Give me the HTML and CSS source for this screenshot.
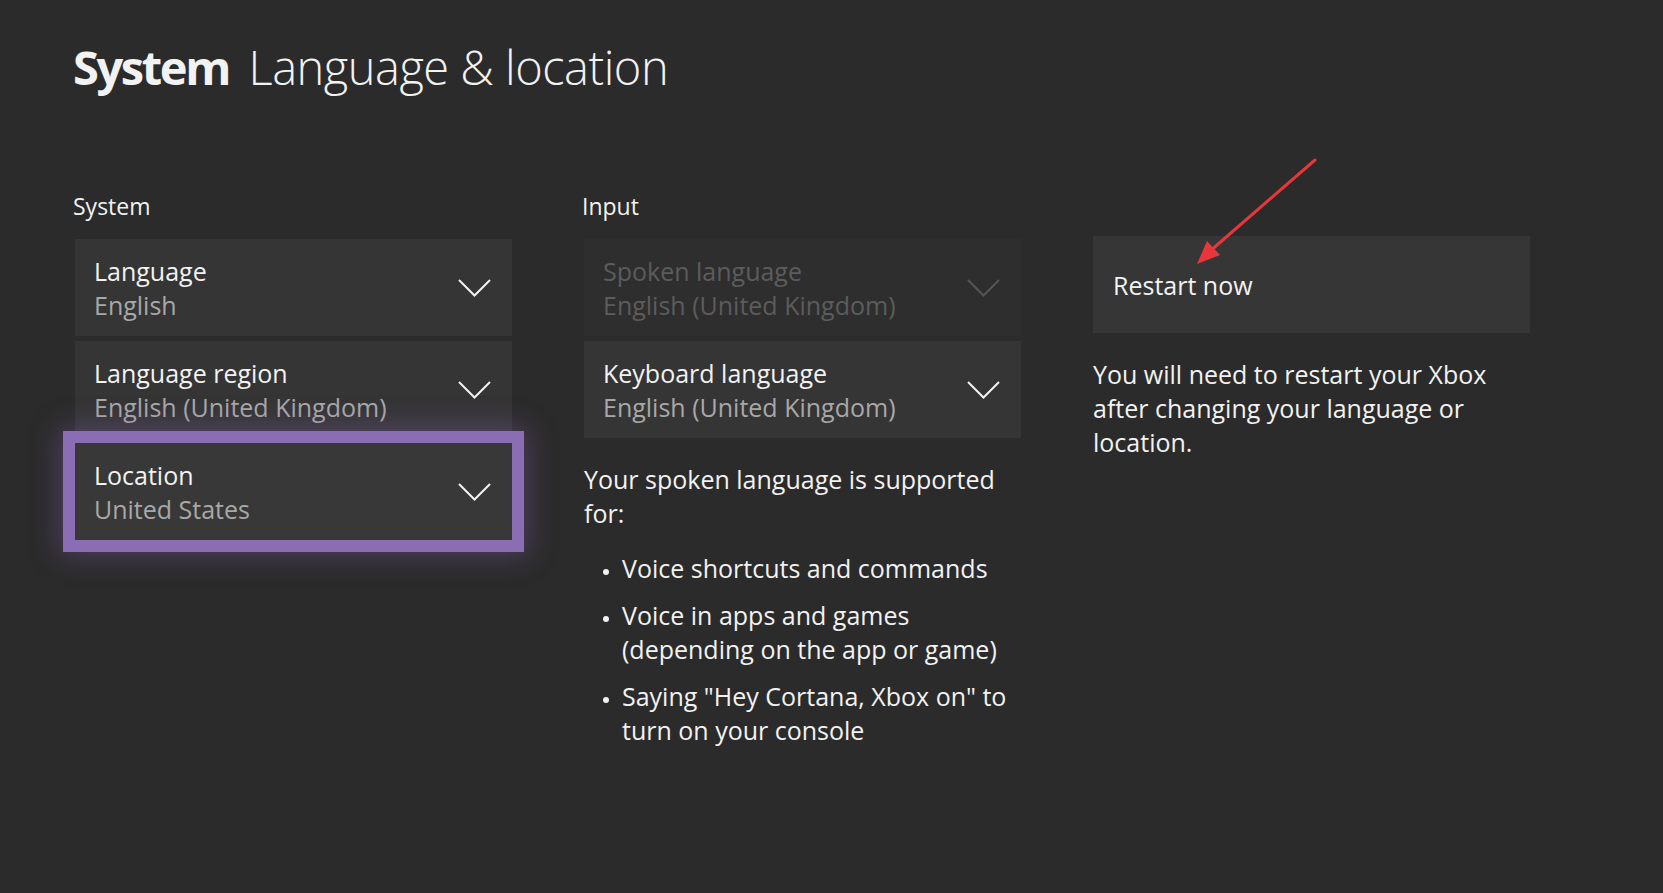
FILE: index.html
```html
<!DOCTYPE html>
<html lang="en">
<head>
    <meta charset="UTF-8">
    <title>System Language &amp; location</title>
    <link rel="stylesheet" href="styles.css">
</head>
<body>
    <h1 class="page-title"><span class="title-bold">System</span> Language &amp; location</h1>

    <div class="columns">
        <!-- colonna sistema -->
        <div class="column">
            <div class="section-label">System</div>
            <div class="dropdown">
                <div class="dropdown-text">
                    <div class="dropdown-name">Language</div>
                    <div class="dropdown-value">English</div>
                </div>
                <svg class="chevron" width="33" height="18" viewBox="0 0 33 18"><polyline points="1,1 16.5,16.5 32,1" fill="none" stroke="#f2f2f2" stroke-width="2"/></svg>
            </div>
            <div class="dropdown">
                <div class="dropdown-text">
                    <div class="dropdown-name">Language region</div>
                    <div class="dropdown-value">English (United Kingdom)</div>
                </div>
                <svg class="chevron" width="33" height="18" viewBox="0 0 33 18"><polyline points="1,1 16.5,16.5 32,1" fill="none" stroke="#f2f2f2" stroke-width="2"/></svg>
            </div>
            <div class="dropdown focused">
                <div class="dropdown-text">
                    <div class="dropdown-name">Location</div>
                    <div class="dropdown-value">United States</div>
                </div>
                <svg class="chevron" width="33" height="18" viewBox="0 0 33 18"><polyline points="1,1 16.5,16.5 32,1" fill="none" stroke="#f2f2f2" stroke-width="2"/></svg>
            </div>
        </div>

        <!-- colonna input -->
        <div class="column">
            <div class="section-label">Input</div>
            <div class="dropdown disabled">
                <div class="dropdown-text">
                    <div class="dropdown-name">Spoken language</div>
                    <div class="dropdown-value">English (United Kingdom)</div>
                </div>
                <svg class="chevron" width="33" height="18" viewBox="0 0 33 18"><polyline points="1,1 16.5,16.5 32,1" fill="none" stroke="#555" stroke-width="2"/></svg>
            </div>
            <div class="dropdown">
                <div class="dropdown-text">
                    <div class="dropdown-name">Keyboard language</div>
                    <div class="dropdown-value">English (United Kingdom)</div>
                </div>
                <svg class="chevron" width="33" height="18" viewBox="0 0 33 18"><polyline points="1,1 16.5,16.5 32,1" fill="none" stroke="#f2f2f2" stroke-width="2"/></svg>
            </div>
            <p class="info-text">Your spoken language is supported for:</p>
            <ul class="support-list">
                <li>Voice shortcuts and commands</li>
                <li>Voice in apps and games (depending on the app or game)</li>
                <li>Saying "Hey Cortana, Xbox on" to turn on your console</li>
            </ul>
        </div>

        <!-- colonna riavvio -->
        <div class="column restart-column">
            <div class="restart-button">Restart now</div>
            <p class="info-text restart-info">You will need to restart your Xbox after changing your language or location.</p>
        </div>
    </div>

    <!-- freccia rossa -->
    <svg class="red-arrow" width="140" height="120" viewBox="0 0 140 120">
        <line x1="128" y1="2" x2="22" y2="94" stroke="#e8373b" stroke-width="3" stroke-linecap="round"/>
        <polygon points="10,106 20,83 33,97" fill="#e8373b"/>
    </svg>
</body>
</html>
```

FILE: styles.css
```css
body {
    margin: 0;
    background-color: #2b2b2b;
    color: #f2f2f2;
    font-family: 'Open Sans', 'Noto Sans', sans-serif;
    width: 1663px;
    height: 893px;
    overflow: hidden;
    position: relative;
}
.page-title {
    margin: 0;
    padding: 34px 0 0 73px;
    font-size: 47px;
    font-weight: 300;
    line-height: 66px;
    letter-spacing: -0.5px;
}
.title-bold {
    font-weight: 700;
    letter-spacing: -2.4px;
    margin-right: 8px;
}
.columns {
    display: flex;
    gap: 72px;
    padding: 91px 0 0 75px;
}
.column {
    width: 437px;
    display: flex;
    flex-direction: column;
    gap: 5px;
}
.section-label {
    font-size: 23px;
    line-height: 30px;
    margin: 0 0 13px -2px;
}
.dropdown {
    height: 97px;
    box-sizing: border-box;
    background-color: #353535;
    padding: 0 21px 0 19px;
    display: flex;
    align-items: center;
    justify-content: space-between;
}
.dropdown-name {
    font-size: 25px;
    line-height: 34px;
}
.dropdown-value {
    font-size: 25px;
    line-height: 34px;
    color: #a8a8a8;
}
.chevron {
    display: block;
}
.dropdown.disabled {
    background-color: #2e2e2e;
}
.dropdown.disabled .dropdown-name,
.dropdown.disabled .dropdown-value {
    color: #5c5c5c;
}
.dropdown.focused {
    background-color: #383838;
    box-shadow: 0 0 0 12px #8a6db3, 0 0 26px 16px rgba(140, 100, 190, 0.35);
    position: relative;
}
.info-text {
    font-size: 25px;
    line-height: 34px;
    margin: 19px 0 0 0;
}
.support-list {
    margin: 16px 0 0 0;
    padding: 0 0 0 38px;
    font-size: 25px;
    line-height: 34px;
}
.support-list li {
    margin-bottom: 13px;
    padding-left: 0;
}
.support-list li::marker {
    font-size: 18px;
}
.restart-column {
    padding-top: 45px;
}
.restart-button {
    height: 97px;
    background-color: #363636;
    display: flex;
    align-items: center;
    padding-left: 20px;
    font-size: 25px;
}
.restart-info {
    max-width: 415px;
}
.red-arrow {
    position: absolute;
    left: 1187px;
    top: 158px;
}
```
